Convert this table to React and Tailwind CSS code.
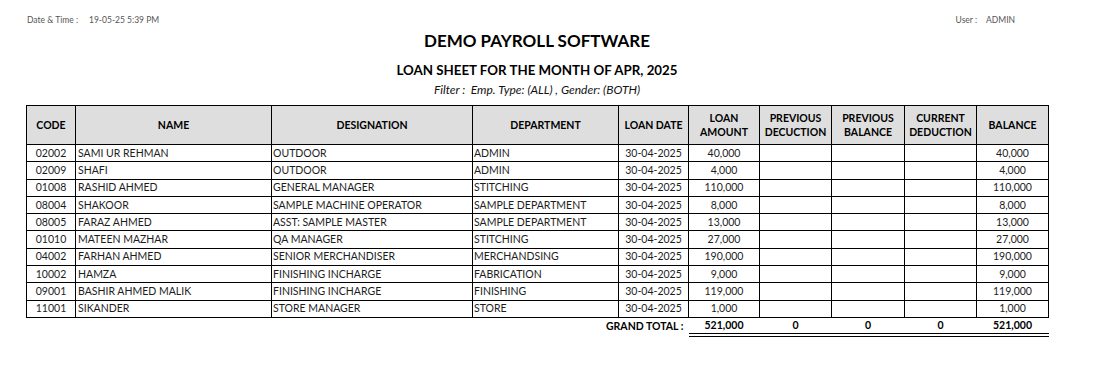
import React from "react";

const rows = [
  ["02002", "SAMI UR REHMAN", "OUTDOOR", "ADMIN", "30-04-2025", "40,000", "40,000"],
  ["02009", "SHAFI", "OUTDOOR", "ADMIN", "30-04-2025", "4,000", "4,000"],
  ["01008", "RASHID AHMED", "GENERAL MANAGER", "STITCHING", "30-04-2025", "110,000", "110,000"],
  ["08004", "SHAKOOR", "SAMPLE MACHINE OPERATOR", "SAMPLE DEPARTMENT", "30-04-2025", "8,000", "8,000"],
  ["08005", "FARAZ AHMED", "ASST: SAMPLE MASTER", "SAMPLE DEPARTMENT", "30-04-2025", "13,000", "13,000"],
  ["01010", "MATEEN MAZHAR", "QA MANAGER", "STITCHING", "30-04-2025", "27,000", "27,000"],
  ["04002", "FARHAN AHMED", "SENIOR MERCHANDISER", "MERCHANDSING", "30-04-2025", "190,000", "190,000"],
  ["10002", "HAMZA", "FINISHING INCHARGE", "FABRICATION", "30-04-2025", "9,000", "9,000"],
  ["09001", "BASHIR AHMED MALIK", "FINISHING INCHARGE", "FINISHING", "30-04-2025", "119,000", "119,000"],
  ["11001", "SIKANDER", "STORE MANAGER", "STORE", "30-04-2025", "1,000", "1,000"],
];

const th = "border border-black bg-[#dedede] font-bold text-[10.5px] leading-[14px] text-black text-center align-middle p-0";
const td = "border border-black text-[10.5px] leading-[15px] text-[#1c1c1c] h-[17.3px] p-0 whitespace-nowrap overflow-hidden";
const ft = "text-[10.5px] font-bold text-black text-center h-[16px] p-0 leading-[15px] align-middle";
const ftLine = "border-b-4 border-double border-black";

export default function App() {
  return (
    <div className="w-[1119px] h-[383px] bg-white font-['Lato',sans-serif] text-black">
      <div className="ml-[26px] w-[1022px]">
        <div className="flex justify-between items-start h-[30px] pt-[14px] pl-[1px] pr-[33px] text-[8.5px] leading-[12px] text-[#555] whitespace-nowrap">
          <div className="flex">
            <span className="w-[62px]">Date &amp; Time :</span>
            <span>19-05-25 5:39 PM</span>
          </div>
          <div className="flex gap-[9px]">
            <span>User :</span>
            <span>ADMIN</span>
          </div>
        </div>
        <div className="text-center font-bold text-[17px] leading-[22px]">DEMO PAYROLL SOFTWARE</div>
        <div className="text-center font-bold text-[13.3px] leading-[18px] mt-[9px]">LOAN SHEET FOR THE MONTH OF APR, 2025</div>
        <div className="text-center italic text-[12px] leading-[14px] mt-[4px] text-[#111]">Filter :&nbsp; Emp. Type: (ALL) , Gender: (BOTH)</div>
        <table className="mt-[8px] border-collapse table-fixed w-[1022px]">
          <colgroup>
            <col className="w-[49px]" />
            <col className="w-[196px]" />
            <col className="w-[201px]" />
            <col className="w-[146px]" />
            <col className="w-[70px]" />
            <col className="w-[71px]" />
            <col className="w-[72px]" />
            <col className="w-[73px]" />
            <col className="w-[72px]" />
            <col className="w-[72px]" />
          </colgroup>
          <thead>
            <tr className="h-[39px]">
              <th className={th}>CODE</th>
              <th className={th}>NAME</th>
              <th className={th}>DESIGNATION</th>
              <th className={th}>DEPARTMENT</th>
              <th className={th}>LOAN DATE</th>
              <th className={th}>LOAN<br />AMOUNT</th>
              <th className={th}>PREVIOUS<br />DECUCTION</th>
              <th className={th}>PREVIOUS<br />BALANCE</th>
              <th className={th}>CURRENT<br />DEDUCTION</th>
              <th className={th}>BALANCE</th>
            </tr>
          </thead>
          <tbody>
            {rows.map((r) => (
              <tr key={r[0]}>
                <td className={td + " text-center"}>{r[0]}</td>
                <td className={td + " text-left pl-[2px]"}>{r[1]}</td>
                <td className={td + " text-left pl-[1px]"}>{r[2]}</td>
                <td className={td + " text-left pl-[1px]"}>{r[3]}</td>
                <td className={td + " text-center"}>{r[4]}</td>
                <td className={td + " text-center"}>{r[5]}</td>
                <td className={td}></td>
                <td className={td}></td>
                <td className={td}></td>
                <td className={td + " text-center"}>{r[6]}</td>
              </tr>
            ))}
          </tbody>
          <tfoot>
            <tr>
              <td colSpan={5} className={ft + " text-right pr-[5px]"}>GRAND TOTAL :</td>
              <td className={ft + " " + ftLine}>521,000</td>
              <td className={ft + " " + ftLine}>0</td>
              <td className={ft + " " + ftLine}>0</td>
              <td className={ft + " " + ftLine}>0</td>
              <td className={ft + " " + ftLine}>521,000</td>
            </tr>
          </tfoot>
        </table>
      </div>
    </div>
  );
}
